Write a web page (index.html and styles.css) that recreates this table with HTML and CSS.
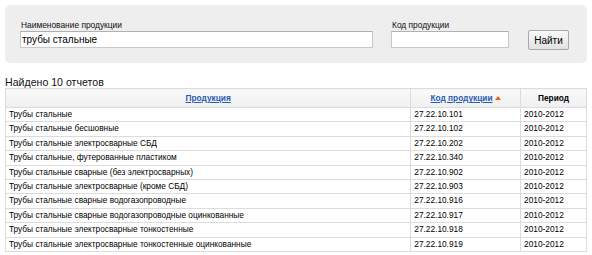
FILE: index.html
```html
<!DOCTYPE html>
<html lang="ru">
<head>
<meta charset="utf-8">
<title>Поиск продукции</title>
<link rel="stylesheet" href="styles.css">
</head>
<body>
<form class="search">
  <div class="field field-name">
    <label class="label">Наименование продукции</label>
    <input class="input input-name" type="text" value="трубы стальные">
  </div>
  <div class="field field-code">
    <label class="label">Код продукции</label>
    <input class="input input-code" type="text" value="">
  </div>
  <button class="btn" type="button">Найти</button>
</form>
<div class="found">Найдено 10 отчетов</div>
<table class="results">
  <colgroup>
    <col class="c1"><col class="c2"><col class="c3">
  </colgroup>
  <thead>
    <tr>
      <th><a href="#" class="sort">Продукция</a></th>
      <th><a href="#" class="sort">Код продукции</a> <svg class="arrow" width="6" height="4" viewBox="0 0 6 4"><path d="M0 4 L3 0 L6 4 Z" fill="#e8601c"/></svg></th>
      <th>Период</th>
    </tr>
  </thead>
  <tbody>
    <tr><td>Трубы стальные</td><td>27.22.10.101</td><td>2010-2012</td></tr>
    <tr><td>Трубы стальные бесшовные</td><td>27.22.10.102</td><td>2010-2012</td></tr>
    <tr><td>Трубы стальные электросварные СБД</td><td>27.22.10.202</td><td>2010-2012</td></tr>
    <tr><td>Трубы стальные, футерованные пластиком</td><td>27.22.10.340</td><td>2010-2012</td></tr>
    <tr><td>Трубы стальные сварные (без электросварных)</td><td>27.22.10.902</td><td>2010-2012</td></tr>
    <tr><td>Трубы стальные электросварные (кроме СБД)</td><td>27.22.10.903</td><td>2010-2012</td></tr>
    <tr><td>Трубы стальные сварные водогазопроводные</td><td>27.22.10.916</td><td>2010-2012</td></tr>
    <tr><td>Трубы стальные сварные водогазопроводные оцинкованные</td><td>27.22.10.917</td><td>2010-2012</td></tr>
    <tr><td>Трубы стальные электросварные тонкостенные</td><td>27.22.10.918</td><td>2010-2012</td></tr>
    <tr><td>Трубы стальные электросварные тонкостенные оцинкованные</td><td>27.22.10.919</td><td>2010-2012</td></tr>
  </tbody>
</table>
</body>
</html>
```
FILE: styles.css
```css
* { box-sizing: border-box; }
body {
  margin: 0;
  padding: 5px;
  font-family: "Liberation Sans", Arial, sans-serif;
  color: #111;
  background: #fff;
}
.search {
  display: flex;
  align-items: flex-end;
  background: #eeeeee;
  border-radius: 5px;
  padding: 15px 16px 15px 15px;
  height: 58px;
  margin: 0;
}
.field {
  display: flex;
  flex-direction: column;
}
.field-name { width: 353px; }
.field-code { width: 118px; margin-left: 18px; }
.label {
  font-size: 8.4px;
  line-height: 10px;
  color: #111;
  padding-left: 1px;
  margin-bottom: 1px;
}
.input {
  height: 17px;
  border: 1px solid #c8c8c8;
  border-top-color: #b0b0b0;
  background: #fff;
  font-family: "Liberation Sans", Arial, sans-serif;
  font-size: 10px;
  color: #000;
  padding: 0 1px;
  margin: 0;
  outline: none;
}
.input-name { width: 353px; }
.input-code { width: 118px; }
.btn {
  margin-left: 19px;
  margin-bottom: -2px;
  height: 20px;
  width: 41px;
  padding: 0;
  font-family: "Liberation Sans", Arial, sans-serif;
  font-size: 10px;
  color: #000;
  border: 1px solid #a8a8a8;
  border-radius: 2px;
  background: linear-gradient(#fafafa, #e2e2e2);
}
.found {
  margin-top: 13px;
  font-size: 10.6px;
  line-height: 12px;
  color: #111;
}
.results {
  width: 582px;
  border-collapse: collapse;
  margin-top: 0;
  font-size: 8.3px;
}
.c1 { width: 406px; }
.c2 { width: 110px; }
.c3 { width: 66px; }
.results th {
  height: 19px;
  background: linear-gradient(#fafafa, #efefef);
  border: 1px solid #dcdcdc;
  font-weight: bold;
  font-size: 8.3px;
  color: #000;
  text-align: center;
  padding: 0;
}
.sort {
  color: #2a5db0;
  text-decoration: underline;
}
.arrow { vertical-align: 1px; margin-left: 0; }
.results td {
  border: 1px solid #dcdcdc;
  padding: 0 2px 0 3px;
  line-height: 13.4px;
  color: #000;
  white-space: nowrap;
}
```
